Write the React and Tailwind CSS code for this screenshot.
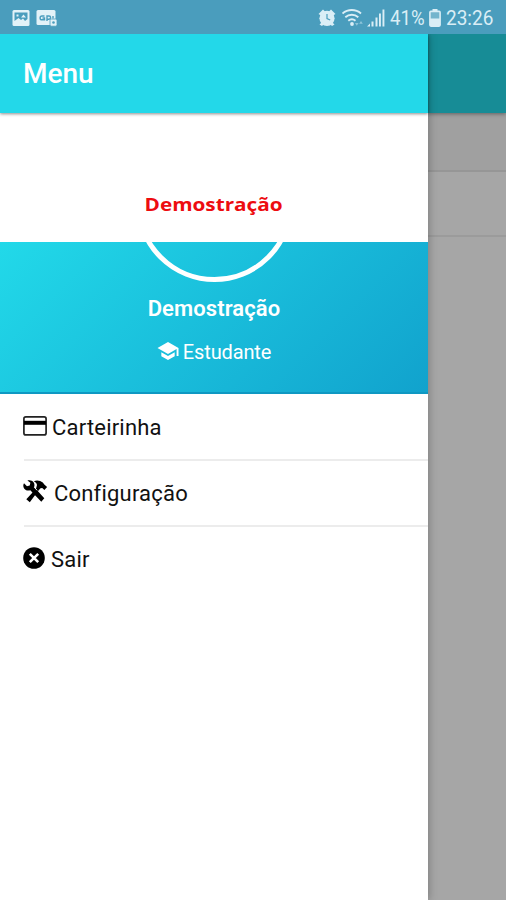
import { IoMdSchool } from 'react-icons/io';

const menuItems = [
  { label: 'Carteirinha', icon: CardIcon, iconCls: 'w-[24px] h-[20px] -ml-px -mt-[2px]', gap: 'ml-[5px]' },
  { label: 'Configuração', icon: ToolsIcon, iconCls: 'w-[26px] h-[24px] -ml-[2px] -mt-[3px]', gap: 'ml-[6px]' },
  { label: 'Sair', icon: CloseIcon, iconCls: 'w-[22px] h-[22px] -ml-px -mt-[5px]', gap: 'ml-[6px] -mt-[2px]' },
];

function CardIcon({ className }) {
  return (
    <svg viewBox="0 0 24 20" className={className}>
      <rect x="0.900" y="0.900" width="22.200" height="18" rx="2" fill="none" stroke="#222" strokeWidth="1.700" />
      <path d="M1 4.800h22v4H1z" fill="#000" />
    </svg>
  );
}

function ToolsIcon({ className }) {
  return (
    <svg viewBox="0 0 26 24" className={className}>
      <path d="M2 3.200l3 3 2.700-.700.700-2.700-3-2.300c2.300-.800 4.700-.200 6 1.600 1.200 1.500 1.300 3.300.700 5L22.300 18.300 19.300 21.800 8.300 10.300C6 11 3.800 10.500 2.300 8.700 1 7 1 4.900 2 3.200z" fill="#000" />
      <path d="M11.800 1.200c3-1.300 6.500-.700 9 1.300l1.500 2 2.800 2.600-2.700 3-2.200-2-1.700.200-2.200 2.500L7.800 22.300 4.300 19.200 14 8.700l1-3.700c-.300-1.700-1.500-2.900-3.200-3.800z" fill="#000" />
      <path d="M12.200 7.200l3 3.200" stroke="#fff" strokeWidth="1" />
    </svg>
  );
}

function CloseIcon({ className }) {
  return (
    <svg viewBox="0 0 22 22" className={className}>
      <circle cx="11" cy="11" r="10.800" fill="#000" />
      <path d="M6.800 6.800l8.400 8.400M15.200 6.800l-8.400 8.400" stroke="#fff" strokeWidth="2.600" />
    </svg>
  );
}

function PictureIcon() {
  return (
    <svg viewBox="0 0 18 18" className="w-[18px] h-[18px]">
      <rect x="0.5" y="1" width="17" height="16" rx="1.5" fill="#e2f2f8" />
      <path d="M2.500 3.500h13v6.500l-2.500 2-2-2.500-2 1.500-2.500-2-4 3z" fill="#4a9dbd" />
      <path d="M4.500 5.500h2v2h-2zM9 8.500l2.500-3L14 8.500z" fill="#e2f2f8" />
    </svg>
  );
}

function CardLockIcon() {
  return (
    <svg viewBox="0 0 22 18" className="w-[22px] h-[18px]">
      <rect x="0.5" y="1" width="19" height="15" rx="1.5" fill="#e2f2f8" />
      <path d="M8.500 7H6a1.900 1.900 0 0 0 0 3.800h2.500V9H6.500M11 12V7h2a1.500 1.500 0 0 1 0 3.200h-2M17 9.500V7" fill="none" stroke="#4a9dbd" strokeWidth="1.400" />
      <rect x="14" y="10" width="7" height="7.200" rx="1.500" fill="#e2f2f8" stroke="#4a9dbd" strokeWidth="0.800" />
      <circle cx="17.500" cy="13.500" r="1.300" fill="#4a9dbd" />
    </svg>
  );
}

function AlarmIcon() {
  return (
    <svg viewBox="0 0 18 18" className="w-[18px] h-[18px]">
      <path d="M0.500 5l4.500-4.500 2 2-4 4zM17.500 5l-4.500-4.500-2 2 4 4zM1.500 15.500l3-3 2 2-2.500 2.500zM16.500 15.500l-3-3-2 2 2.500 2.500z" fill="#daeef6" />
      <circle cx="9" cy="9.300" r="7.600" fill="#daeef6" />
      <path d="M9 5v4.500l3.200 1.500" fill="none" stroke="#4a9dbd" strokeWidth="1.200" />
    </svg>
  );
}

function WifiIcon() {
  return (
    <svg viewBox="0 0 22 18" className="w-[22px] h-[18px]">
      <g fill="none" stroke="#daeef6" strokeWidth="1.900">
        <path d="M0.500 4.500a14 14 0 0 1 18.500 0" />
        <path d="M3.300 8.200a9.800 9.800 0 0 1 13 0" />
        <path d="M6.300 11.700a5.600 5.600 0 0 1 7.200 0" />
      </g>
      <circle cx="10" cy="15" r="1.900" fill="#daeef6" />
      <path d="M13 14h3.600l-1.800 2.800zM17.200 14.800h3.600L19 12z" fill="#8fc5da" />
    </svg>
  );
}

function SignalIcon() {
  return (
    <svg viewBox="0 0 18 18" className="w-[18px] h-[18px]">
      <path d="M0 17.500l3-3v3zM4.500 17.500v-5h2v5zM8.500 17.500V8.500h2v9zM12 17.500V4.500h1.900v13zM15.500 17.500V0.500h1.900v17z" fill="#daeef6" />
    </svg>
  );
}

function BatteryIcon() {
  return (
    <svg viewBox="0 0 12 18" className="w-[12px] h-[18px]">
      <path d="M3.500 0h5v2.500h-5z" fill="#daeef6" />
      <rect x="0.900" y="2.400" width="10.200" height="14.700" rx="1" fill="#74b5cd" stroke="#daeef6" strokeWidth="1.600" />
      <path d="M1 9.500h10V17H1z" fill="#daeef6" />
    </svg>
  );
}

function StatusBar() {
  return (
    <div className="relative z-20 flex h-[34px] shrink-0 items-center justify-between bg-[#4a9dbd] pl-[12px] pr-[13px] pt-px text-[#daeef6]">
      <div className="flex items-center gap-[6px]">
        <PictureIcon />
        <CardLockIcon />
      </div>
      <div className="flex items-center">
        <AlarmIcon />
        <span className="ml-[6px]"><WifiIcon /></span>
        <span className="ml-[3px]"><SignalIcon /></span>
        <span className="ml-[5px] w-[36px] origin-left scale-x-[0.93] text-[20px] leading-[34px]">41%</span>
        <span className="ml-[3px]"><BatteryIcon /></span>
        <span className="ml-[5px] w-[47px] origin-left scale-x-[0.95] text-[20px] leading-[34px]">23:26</span>
      </div>
    </div>
  );
}

function Profile() {
  return (
    <div className="relative flex h-[281px] shrink-0 flex-col bg-linear-[135deg,#22d9e9,#11a2cd] bg-[length:100%_152px] bg-bottom bg-no-repeat">
      <div className="absolute left-[136px] top-[12px] h-[157px] w-[157px] rounded-full border-[5px] border-white" />
      <div className="relative flex h-[129px] shrink-0 items-end justify-center bg-white pb-[24px]">
        <span className="origin-center scale-x-[1.22] font-['Open_Sans',sans-serif] text-[17px] font-bold leading-[26px] text-[#ed0c10]">
          Demostração
        </span>
      </div>
      <div className="flex flex-1 flex-col items-center border-b-2 border-[#0f98c2] pt-[53px] text-white">
        <div className="text-[22px] font-semibold leading-[28px] tracking-[0.1px]">Demostração</div>
        <div className="mt-[15px] flex items-center text-[20px] leading-[28px]">
          <IoMdSchool className="-mt-[3px] -ml-px h-[24px] w-[24px]" />
          <span className="ml-[3px] tracking-[-0.15px]">Estudante</span>
        </div>
      </div>
    </div>
  );
}

function SideMenu() {
  return (
    <div className="relative z-10 flex w-[428px] flex-col bg-white shadow-[1px_0_8px_rgba(0,0,0,0.25)]">
      <div className="relative z-10 flex h-[79px] shrink-0 items-center bg-[#23d8e9] pl-[23px] pt-px text-[28px] font-medium text-white shadow-[0_1px_3px_rgba(0,0,0,0.45)]">
        Menu
      </div>
      <Profile />
      <ul className="pl-[24px] pt-px">
        {menuItems.map(({ label, icon: Icon, iconCls, gap }) => (
          <li key={label} className="flex h-[66px] items-center border-b-2 border-[#ececec] text-[22px] tracking-[0.2px] text-[#111] last:border-0">
            <Icon className={iconCls} />
            <span className={gap}>{label}</span>
          </li>
        ))}
      </ul>
    </div>
  );
}

// the page behind the open menu, dimmed by the backdrop
function DimmedPage() {
  return (
    <div className="flex flex-1 flex-col bg-[#a6a6a6]">
      <div className="relative h-[79px] bg-[#178c96] shadow-[0_1px_4px_rgba(0,0,0,0.4)]" />
      <div className="h-[59px] border-b-2 border-[#969696] bg-[#a0a0a0]" />
      <div className="h-[65px] border-b-2 border-[#9b9b9b]" />
    </div>
  );
}

export default function App() {
  return (
    <div className="flex h-[900px] w-[506px] flex-col overflow-hidden font-[Roboto,sans-serif]">
      <StatusBar />
      <div className="flex flex-1">
        <SideMenu />
        <DimmedPage />
      </div>
    </div>
  );
}
